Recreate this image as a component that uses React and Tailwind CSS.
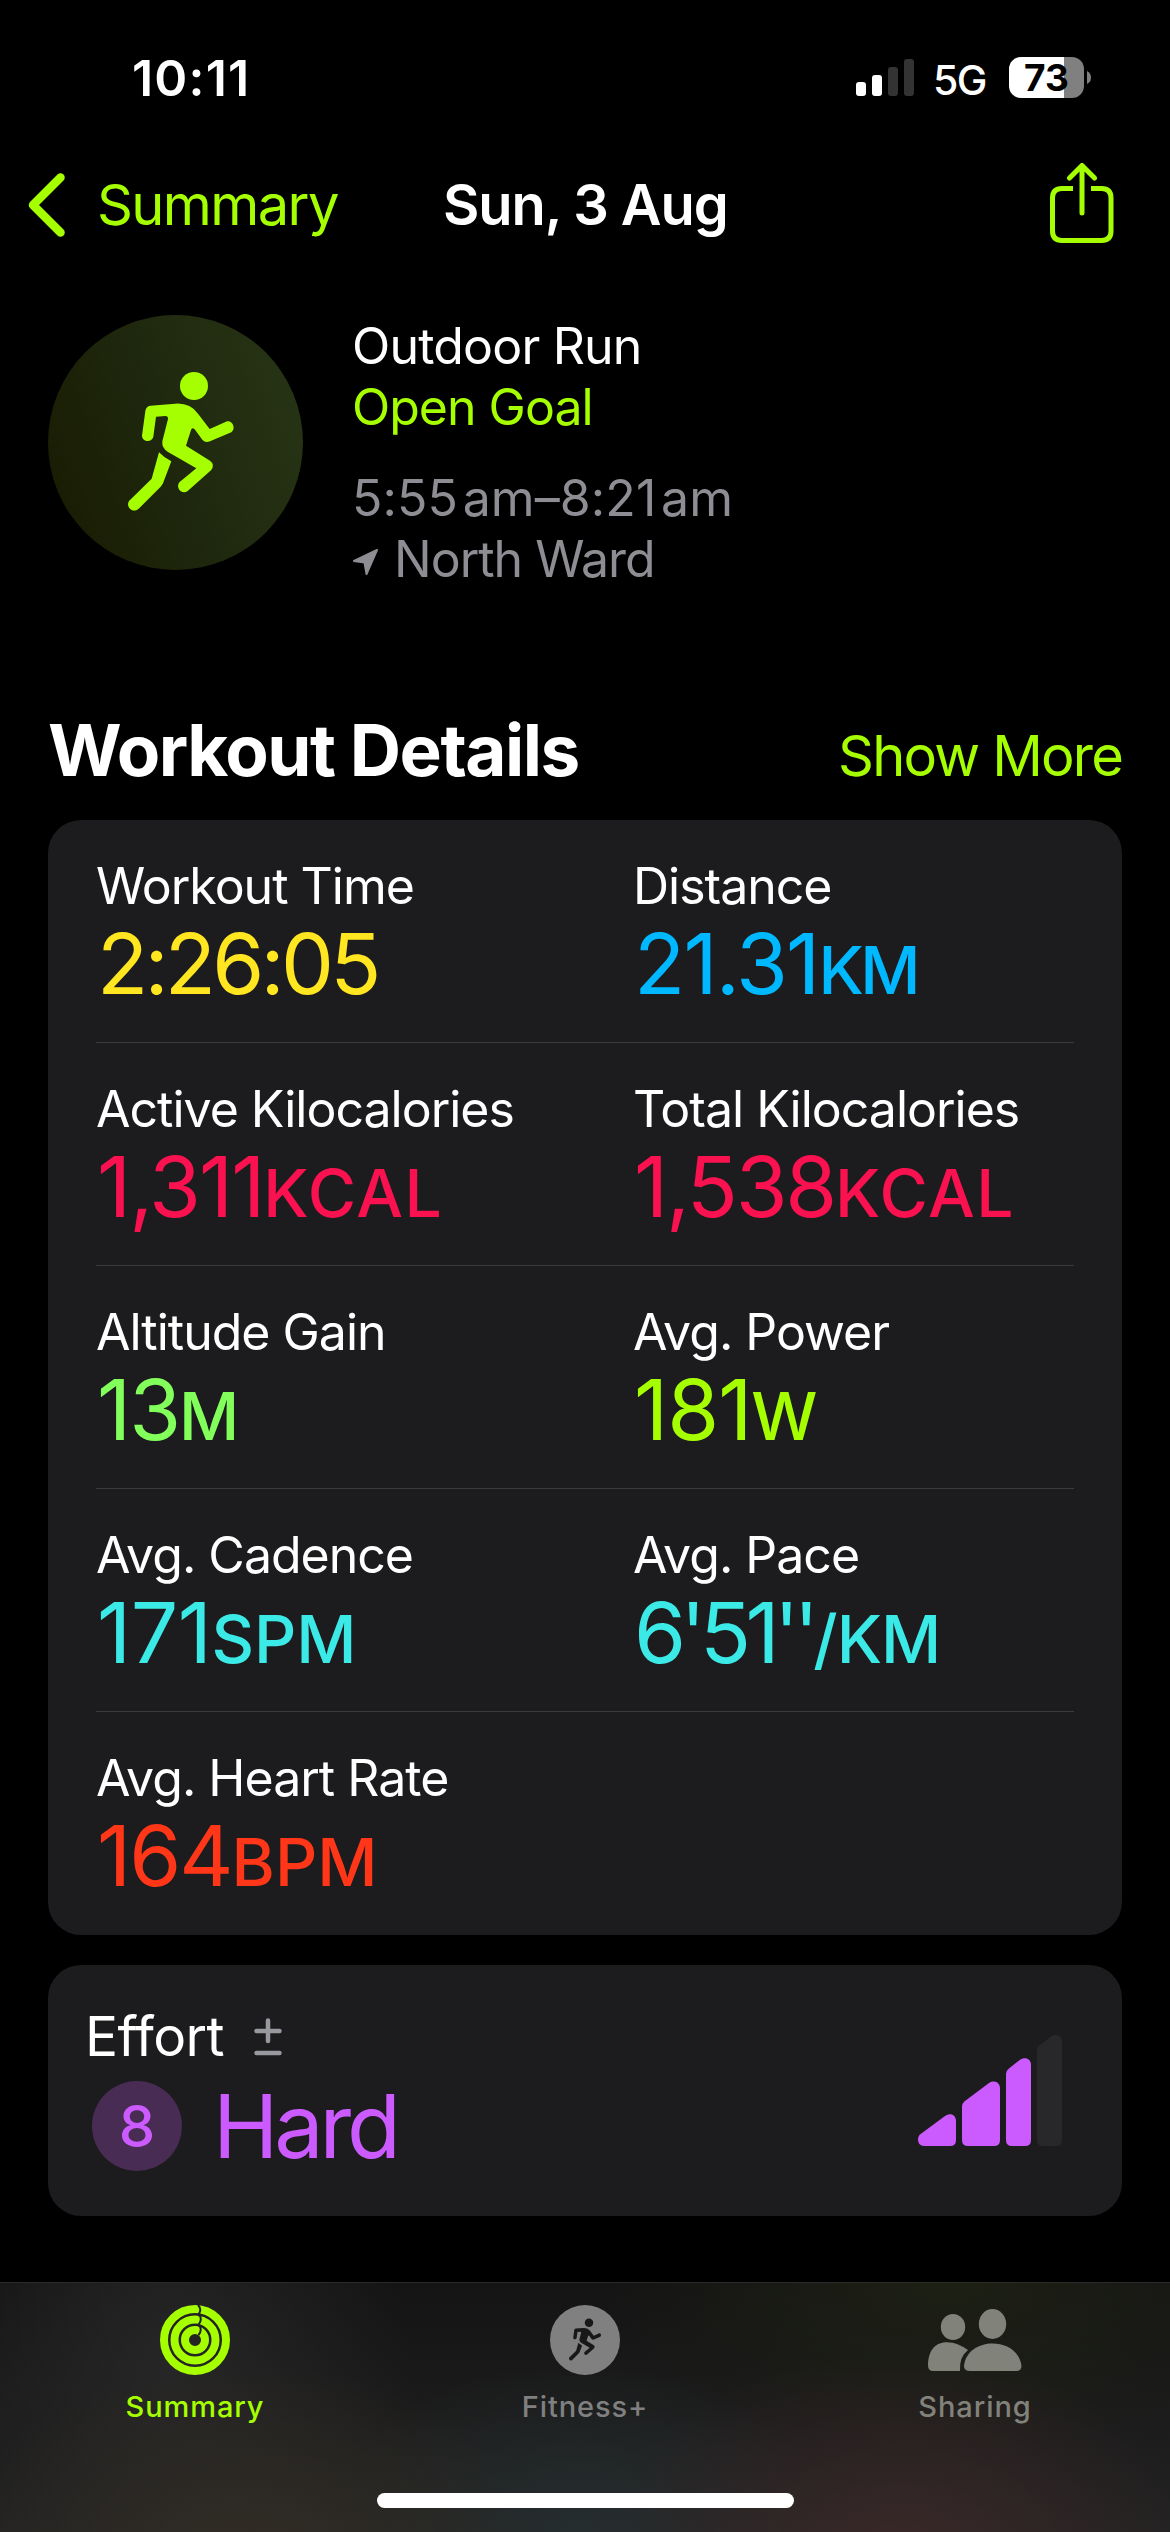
const stats = [
  [
    { label: 'Workout Time', value: '2:26:05', unit: '', tone: 'text-[#ffe620]', spacing: 'tracking-[-3.8px]' },
    { label: 'Distance', value: '21.31', unit: 'KM', tone: 'text-[#00b8ff]', spacing: 'tracking-[-1.8px]', unitSpacing: 'tracking-[-3.5px]' },
  ],
  [
    { label: 'Active Kilocalories', value: '1,311', unit: 'KCAL', tone: 'text-[#fa114f]', spacing: 'tracking-[-2px]', unitSpacing: 'tracking-[1.5px]' },
    { label: 'Total Kilocalories', value: '1,538', unit: 'KCAL', tone: 'text-[#fa114f]', spacing: 'tracking-[-2.2px]', unitSpacing: 'tracking-[1.5px]' },
  ],
  [
    { label: 'Altitude Gain', value: '13', unit: 'M', tone: 'text-[#82ff5b]', spacing: 'tracking-[-2px]' },
    { label: 'Avg. Power', value: '181', unit: 'W', tone: 'text-[#a6ff00]', spacing: 'tracking-[-1px]' },
  ],
  [
    { label: 'Avg. Cadence', value: '171', unit: 'SPM', tone: 'text-[#3be9e6]', spacing: 'tracking-[-0.5px]', unitSpacing: 'tracking-normal' },
    { label: 'Avg. Pace', value: "6'51''", unit: '/KM', tone: 'text-[#3be9e6]', spacing: 'tracking-[-5.6px]', unitSpacing: 'tracking-[-1px]' },
  ],
  [{ label: 'Avg. Heart Rate', value: '164', unit: 'BPM', tone: 'text-[#ff3617]', spacing: 'tracking-[-2px]', unitSpacing: 'tracking-normal' }],
];

function RunnerShape() {
  return (
    <g fill="currentColor">
      <circle cx="492" cy="258" r="42" />
      <path d="M361 317L436 311Q480 308 504 341L539 387L588 365C606 358 620 385 604 397L540 424Q526 430 517 419L494 388Q486 380 483 390L468 437L540 482Q556 494 543 511L473 573C455 586 436 563 448 547L499 505L414 456Q395 445 397 424L414 357Q415 348 406 348L378 350L370 410C364 430 337 425 336 407L346 333Q348 319 361 317Z" />
      <path d="M387 457Q403 474 424 484L399 550Q396 556 392 560L326 626C308 642 286 621 297 603L365 536Z" />
    </g>
  );
}

function StatusBar() {
  return (
    <div className="flex h-[157px] items-start justify-between pr-[79px] pl-[132px]">
      <div className="mt-[48px] text-[50px] leading-[60px] font-semibold tracking-[1.2px]">10:11</div>
      <div className="mt-[57px] flex h-[41px] items-start">
        <svg className="mt-[2px] h-[37px] w-[58px]" viewBox="0 0 58 37" fill="#fff">
          <rect x="0" y="23" width="10" height="14" rx="3" />
          <rect x="16" y="16" width="10" height="21" rx="3" />
          <rect x="32" y="8" width="10" height="29" rx="3" fill="#333" />
          <rect x="48" y="0" width="10" height="37" rx="3" fill="#333" />
        </svg>
        <div className="ml-[19px] w-[58px] text-[41px] leading-[46px] font-medium tracking-[-1.5px]">5G</div>
        <div className="ml-[18px] flex h-[41px] w-[75px] items-center justify-center rounded-[12px] bg-[linear-gradient(90deg,#fff_55px,#808080_55px)] text-[37px] leading-[41px] font-bold text-black">
          73
        </div>
        <svg className="mt-[14px] ml-[3px] h-[13px] w-[4px]" viewBox="0 0 4 13" fill="#808080">
          <path d="M0 0Q4 2 4 6.500T0 13Z" />
        </svg>
      </div>
    </div>
  );
}

function NavBar() {
  return (
    <div className="grid h-[98px] grid-cols-[443px_1fr_120px] items-start">
      <div className="flex text-[#a6ff00]">
        <svg className="mt-[16px] ml-[28px] h-[64px] w-[38px]" viewBox="0 0 38 64" fill="none" stroke="currentColor" strokeWidth="8.500" strokeLinecap="round" strokeLinejoin="round">
          <path d="M32.500 4.500L5 32L32.500 59.500" />
        </svg>
        <div className="ml-[31px] text-[56px] leading-[96px] tracking-[-1.6px]">Summary</div>
      </div>
      <div className="text-[56px] leading-[96px] font-semibold tracking-[-1.1px] whitespace-nowrap">Sun, 3 Aug</div>
      <svg className="mt-[6px] h-[80px] w-[64px] text-[#a6ff00]" viewBox="0 0 64 80" fill="none" stroke="currentColor" strokeWidth="5" strokeLinecap="round" strokeLinejoin="round">
        <path strokeLinecap="butt" d="M23 25.500H12Q2.500 25.500 2.500 35V68Q2.500 77.500 12 77.500H51.500Q61 77.500 61 68V35Q61 25.500 51.500 25.500H41" />
        <path d="M32 50V3M19.500 15L32 2.500L44.500 15" />
      </svg>
    </div>
  );
}

function WorkoutHeader() {
  return (
    <div className="flex h-[255px] px-[48px]">
      <div className="size-[255px] shrink-0 rounded-full bg-[linear-gradient(70deg,#181a00_0%,#1e270d_45%,#263214_85%)] text-[#a6ff00]">
        <svg className="size-[255px]" viewBox="54 45 765 765">
          <RunnerShape />
        </svg>
      </div>
      <div className="ml-[49px] text-[50px] leading-[61px] tracking-[-1px]">
        <div className="mt-[1px] tracking-[-0.8px]">Outdoor Run</div>
        <div className="text-[#a6ff00]">Open Goal</div>
        <div className="mt-[30px] tracking-[0.1px] text-[#8e8d93]">5:55&#8202;am–8:21&#8202;am</div>
        <div className="flex items-center text-[#8e8d93]">
          <svg className="mt-[5px] mr-[16px] ml-px h-[26px] w-[25px]" viewBox="0 0 25 26" fill="currentColor" stroke="currentColor" strokeWidth="2" strokeLinejoin="round">
            <path d="M1 12L24 1L13.500 25L11.500 13.500Z" />
          </svg>
          North Ward
        </div>
      </div>
    </div>
  );
}

function Stat({ label, value, unit, tone, spacing, unitSpacing = 'tracking-normal' }) {
  return (
    <div className="w-[537px] shrink-0">
      <div className="text-[50px] leading-[60px] tracking-[-1px]">{label}</div>
      <div className={`pl-px text-[84px] leading-[96px] ${spacing} ${tone}`}>
        {value}
        <span className={`text-[66px] font-medium ${unitSpacing}`}>{unit}</span>
      </div>
    </div>
  );
}

function EffortCard() {
  return (
    <div className="mx-[48px] mt-[30px] flex h-[251px] justify-between rounded-[33px] bg-[#1c1c1e]">
      <div className="pl-[37px]">
        <div className="mt-[37px] flex h-[68px] items-center text-[55px] leading-[68px] tracking-[-0.6px]">
          <div className="w-[169px]">Effort</div>
          <svg className="mt-[2px] h-[38px] w-[28px]" viewBox="0 0 28 38" stroke="#98989f" strokeWidth="4.500" strokeLinecap="round">
            <path d="M14 2.500V23M2.500 13H25.500M2.500 35H25.500" />
          </svg>
        </div>
        <div className="mt-[11px] flex h-[90px] items-center text-[#cc5bff]">
          <div className="ml-[7px] flex size-[90px] items-center justify-center rounded-full bg-[#482c54] pt-px text-[58px] font-medium">8</div>
          <div className="ml-[31px] text-[88px] leading-[90px] tracking-[-4.2px]">Hard</div>
        </div>
      </div>
      <svg className="mt-[70px] mr-[60px] h-[111px] w-[144px]" viewBox="204 165 432 333" fill="#cc5bff">
        <path d="M204 478Q204 467 213 461L284 409C300 396 318 404 318 423V480Q318 498 300 498H222Q204 498 204 478Z" />
        <path d="M336 380Q336 371 344 364L417 309C434 298 450 308 450 325V480Q450 498 432 498H354Q336 498 336 480Z" />
        <path d="M468 282Q468 272 476 266L509 240C526 228 543 238 543 254V480Q543 498 525 498H486Q468 498 468 480Z" />
        <path fill="#28282a" d="M561 212Q561 202 569 196L602 170C619 158 636 168 636 184V480Q636 498 618 498H579Q561 498 561 480Z" />
      </svg>
    </div>
  );
}

function Tab({ label, tone, children }) {
  return (
    <div className={`flex flex-1 flex-col items-center ${tone}`}>
      <div className="mt-[21px] flex h-[71px] items-center">{children}</div>
      <div className="mt-[12px] mb-[2px] text-[29px] leading-[40px] font-medium tracking-[0.9px]">{label}</div>
    </div>
  );
}

function TabBar() {
  return (
    <div className="mt-[66px] flex h-[250px] flex-col border-t border-[#2b2b2b] bg-[radial-gradient(ellipse_300px_200px_at_900px_270px,#3a2828,transparent),radial-gradient(ellipse_300px_200px_at_250px_280px,#322d25,transparent),radial-gradient(ellipse_260px_170px_at_580px_250px,#252d2f,transparent),radial-gradient(ellipse_340px_170px_at_950px_0px,#1d2014,transparent),radial-gradient(ellipse_240px_300px_at_170px_90px,#262626,transparent),linear-gradient(180deg,#141414,#222222)]">
      <div className="flex">
        <Tab label="Summary" tone="text-[#a6ff00]">
          <svg className="size-[70px]" viewBox="0 0 70 70" fill="none">
            <g stroke="currentColor" strokeWidth="8">
              <circle cx="35" cy="35" r="31" />
              <circle cx="35" cy="35" r="20.500" />
              <circle cx="35" cy="35" r="10" />
            </g>
            <path stroke="#222" strokeWidth="2" d="M38 0Q42 4 39 8.500Q37.500 10 40 11Q42 15 39 19Q37.500 20 40 21.500Q42 26 38.500 30" />
          </svg>
        </Tab>
        <Tab label="Fitness+" tone="text-[#808080]">
          <div className="flex size-[70px] items-center justify-center rounded-full bg-[#808080] text-[#181818]">
            <svg className="h-[43px] w-[34px]" viewBox="290 212 325 425">
              <RunnerShape />
            </svg>
          </div>
        </Tab>
        <Tab label="Sharing" tone="text-[#81837b]">
          <svg className="h-[62px] w-[94px]" viewBox="0 0 94 62" fill="currentColor">
            <ellipse cx="25" cy="18" rx="12.200" ry="13" />
            <ellipse cx="64.500" cy="15" rx="13.700" ry="15" />
            <path d="M0 56C1 26 27 31 40 41Q31 48 32 62H5Q0 62 0 56Z" />
            <path d="M36 57C39 27 90 27 93.500 57Q93.500 62 88 62H42Q36 62 36 57Z" />
          </svg>
        </Tab>
      </div>
      <div className="mx-auto mt-[64px] h-[15px] w-[417px] rounded-full bg-white" />
    </div>
  );
}

export default function App() {
  return (
    <div className="h-[2532px] w-[1170px] overflow-hidden bg-black font-[Inter,sans-serif] text-white">
      <StatusBar />
      <NavBar />
      <div className="h-[60px]" />
      <WorkoutHeader />
      <div className="flex h-[250px] items-end justify-between px-[48px] pb-[28px]">
        <h1 className="mb-[2px] text-[71px] leading-[80px] font-bold tracking-[-1.5px]">Workout Details</h1>
        <div className="text-[56px] leading-[72px] tracking-[-1.8px] text-[#a6ff00]">Show More</div>
      </div>
      <div className="mx-[48px] h-[1115px] rounded-[33px] bg-[#1c1c1e] px-[48px]">
        {stats.map((row, i) => (
          <div key={row[0].label} className={i ? 'flex h-[223px] border-t border-[#3a3a3c] pt-[36px]' : 'flex h-[222px] pt-[36px]'}>
            {row.map((stat) => (
              <Stat key={stat.label} {...stat} />
            ))}
          </div>
        ))}
      </div>
      <EffortCard />
      <TabBar />
    </div>
  );
}
